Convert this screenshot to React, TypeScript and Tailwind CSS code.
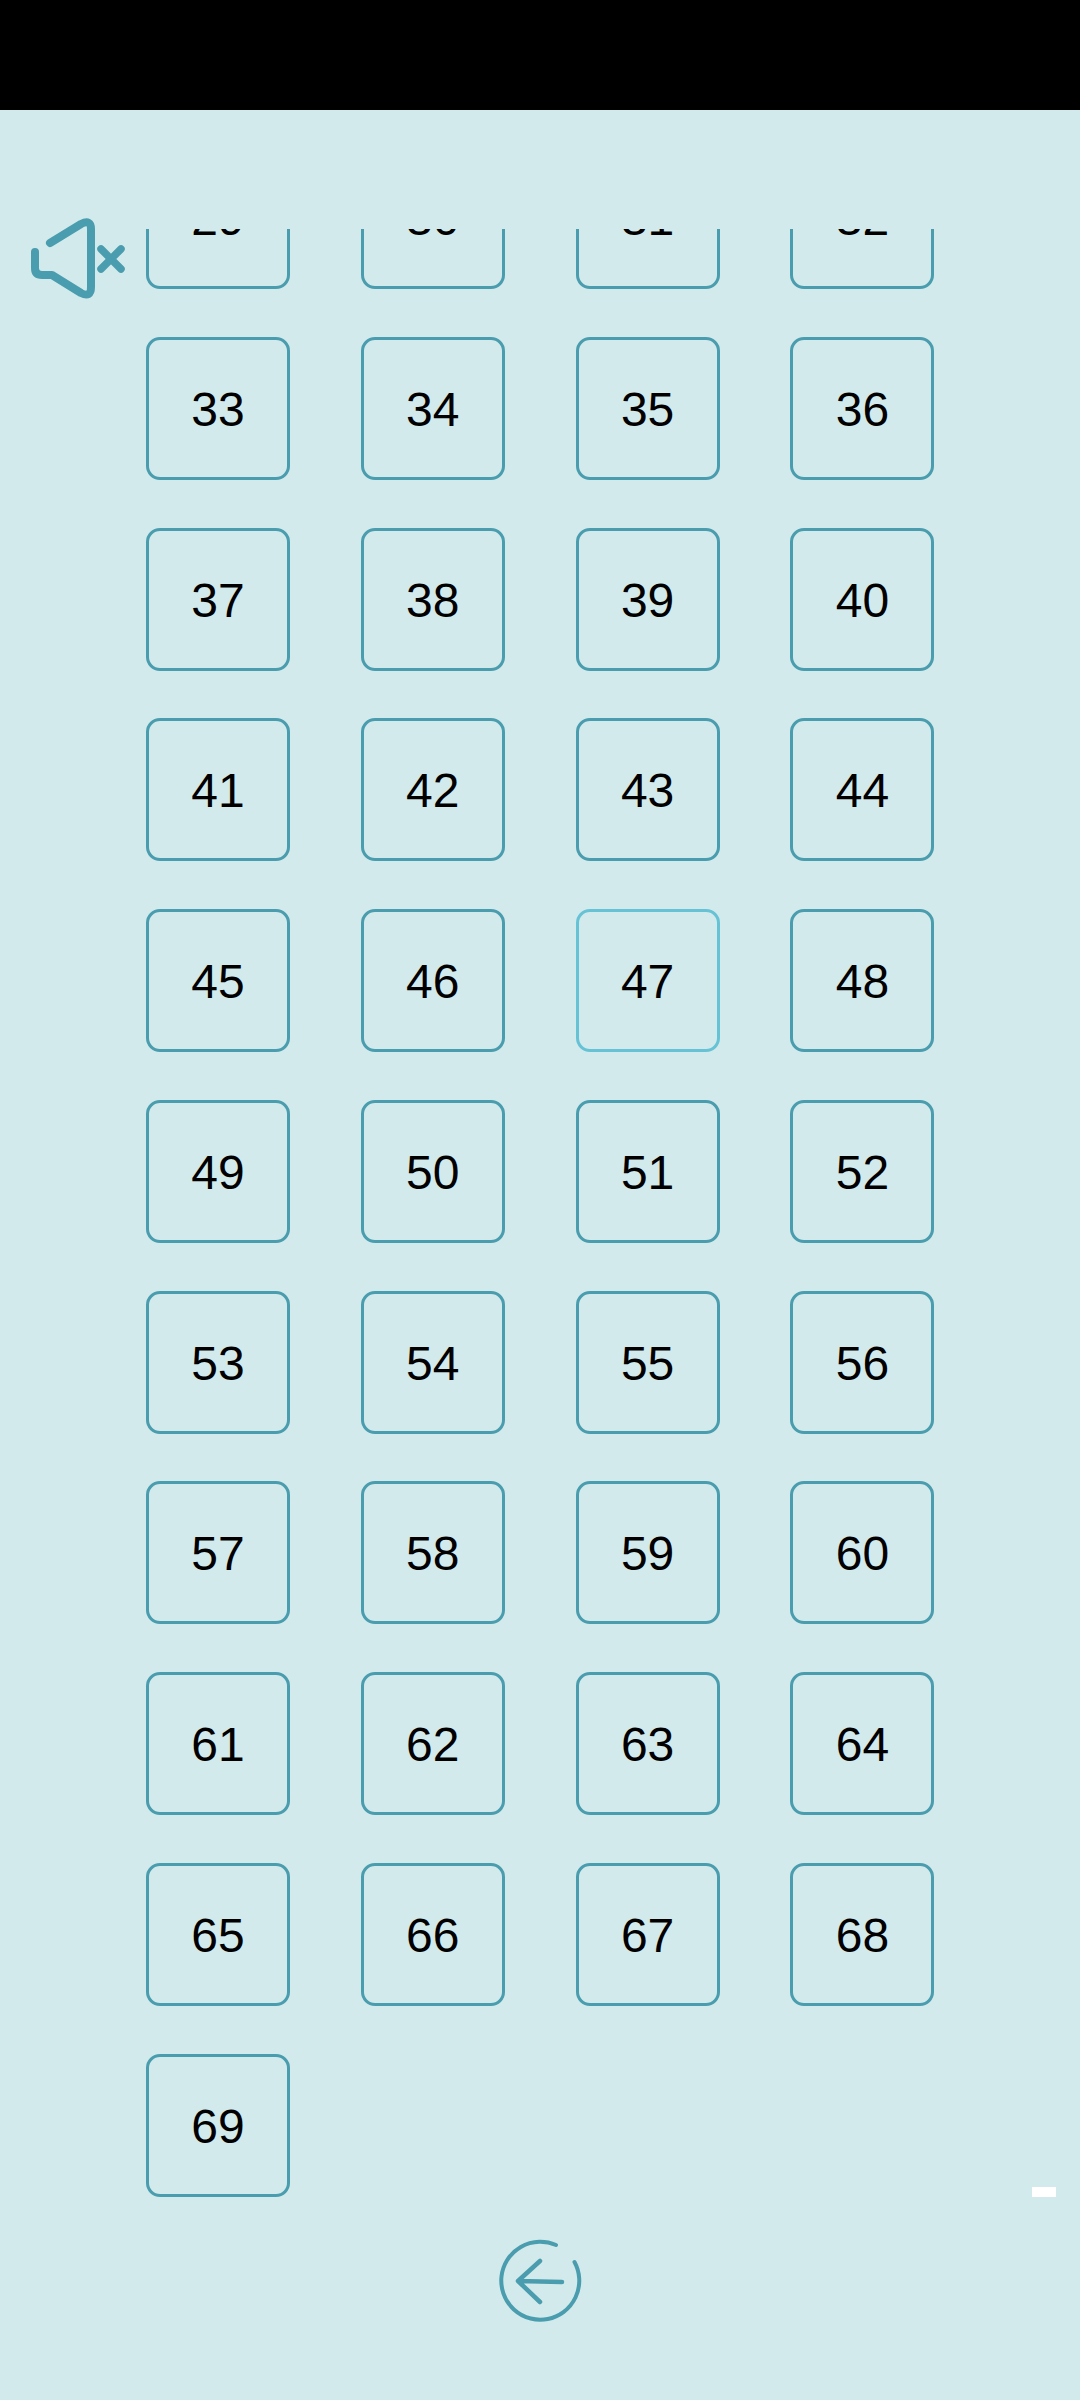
import React from 'react';

const NUMBERS = Array.from({ length: 41 }, (_, i) => i + 29);

const MuteIcon: React.FC = () => (
    <svg className="absolute left-[24px] top-[210px]" width="110" height="96" viewBox="24 210 110 96" fill="none" stroke="#4a9dae" strokeLinecap="round" strokeLinejoin="round">
        <path strokeWidth="8" d="M50 243 L81 224 Q91 219 91 229 L91 287 Q91 298 81 293 L52 275 L42 275 Q35 275 35 268 L35 252" />
        <path strokeWidth="7.5" d="M101 249 L121 269 M121 249 L101 269" />
    </svg>
);

const BackIcon: React.FC = () => (
    <svg width="90" height="90" viewBox="0 0 90 90" fill="none" stroke="#4a9dae" strokeWidth="4" strokeLinecap="round" strokeLinejoin="round">
        <path d="M61 9 A39 39 0 1 0 79.5 26" />
        <path strokeWidth="4.5" d="M45 25 L23 45 L45 66 M23 45 L67 46" />
    </svg>
);

const App: React.FC = () => {
    return (
        <div className="relative flex h-[2400px] w-[1080px] flex-col bg-[#d2eaec] font-['Liberation_Sans',Arial,sans-serif]">
            <div className="h-[110px] shrink-0 bg-black" />
            <div className="mt-[119px] h-[1970px] shrink-0 overflow-hidden">
                <div className="-mt-[83px] ml-[146px] grid grid-cols-[repeat(4,144px)] gap-x-[70.8px] gap-y-[47.75px]">
                    {NUMBERS.map((n) => (
                        <div
                            key={n}
                            className={`flex h-[143px] items-center justify-center rounded-[14px] border-[3px] pt-[3px] text-[48px] leading-none text-black ${n === 47 ? 'border-[#66c3d6]' : 'border-[#4a9dae]'}`}
                        >
                            {n}
                        </div>
                    ))}
                </div>
            </div>
            <div className="mt-[37px] flex justify-center">
                <BackIcon />
            </div>
            <MuteIcon />
            <div className="absolute left-[1032px] top-[2187px] h-[10px] w-[24px] bg-white" />
        </div>
    );
};

export default App;
